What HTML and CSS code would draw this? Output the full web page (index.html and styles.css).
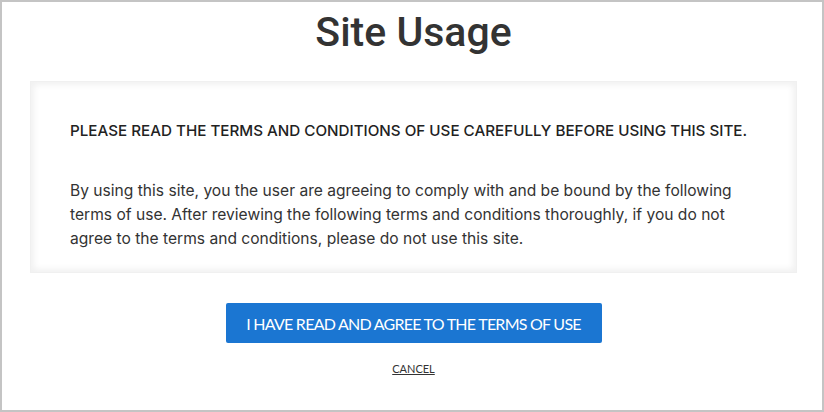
FILE: index.html
```html
<!DOCTYPE html>
<html lang="en">
<head>
  <meta charset="UTF-8" />
  <meta name="viewport" content="width=device-width, initial-scale=1.0" />
  <title>Site Usage</title>
  <link rel="stylesheet" href="styles.css">
</head>
<body>
  <div class="frame">
    <h1 class="title">Site Usage</h1>

    <div class="terms">
      <p class="terms-head">PLEASE READ THE TERMS AND CONDITIONS OF USE CAREFULLY BEFORE USING THIS SITE.</p>
      <p class="terms-text">By using this site, you the user are agreeing to comply with and be bound by the following terms of use. After reviewing the following terms and conditions thoroughly, if you do not agree to the terms and conditions, please do not use this site.</p>
    </div>

    <div class="actions">
      <button class="agree">I HAVE READ AND AGREE TO THE TERMS OF USE</button>
      <a href="#" class="cancel">CANCEL</a>
    </div>
  </div>
</body>
</html>
```

FILE: styles.css
```css
body {
  margin: 0;
  background: #fff;
  font-family: Inter, "Liberation Sans", sans-serif;
}

.frame {
  width: 824px;
  height: 412px;
  box-sizing: border-box;
  border: 2px solid #c4c4c4;
  padding: 6px 25px 0 28px;
  display: flex;
  flex-direction: column;
}

.title {
  margin: 0 0 24px;
  text-align: center;
  font-family: Roboto, Inter, sans-serif;
  font-size: 41px;
  line-height: 49px;
  font-weight: 500;
  color: #333;
}

.terms {
  border: 1px solid #f0f0f0;
  box-shadow: inset 0 0 6px 3px #f1f1f1;
  padding: 37px 40px 22px 39px;
  height: 192px;
  box-sizing: border-box;
}

.terms-head {
  margin: 0 0 36px;
  font-size: 15.2px;
  line-height: 24px;
  font-weight: 500;
  color: #222;
}

.terms-text {
  margin: 0;
  font-size: 15.6px;
  line-height: 24px;
  color: #333;
}

.actions {
  display: flex;
  flex-direction: column;
  align-items: center;
  margin-top: 30px;
}

.agree {
  width: 376px;
  height: 40px;
  border: none;
  border-radius: 2px;
  background: #1b76d2;
  color: #fff;
  font-family: Lato, "Open Sans", sans-serif;
  font-size: 16px;
  letter-spacing: -0.75px;
  white-space: nowrap;
  cursor: pointer;
}

.cancel {
  margin-top: 19px;
  font-family: Lato, "Open Sans", sans-serif;
  font-size: 11px;
  line-height: 14px;
  color: #333;
}
```
